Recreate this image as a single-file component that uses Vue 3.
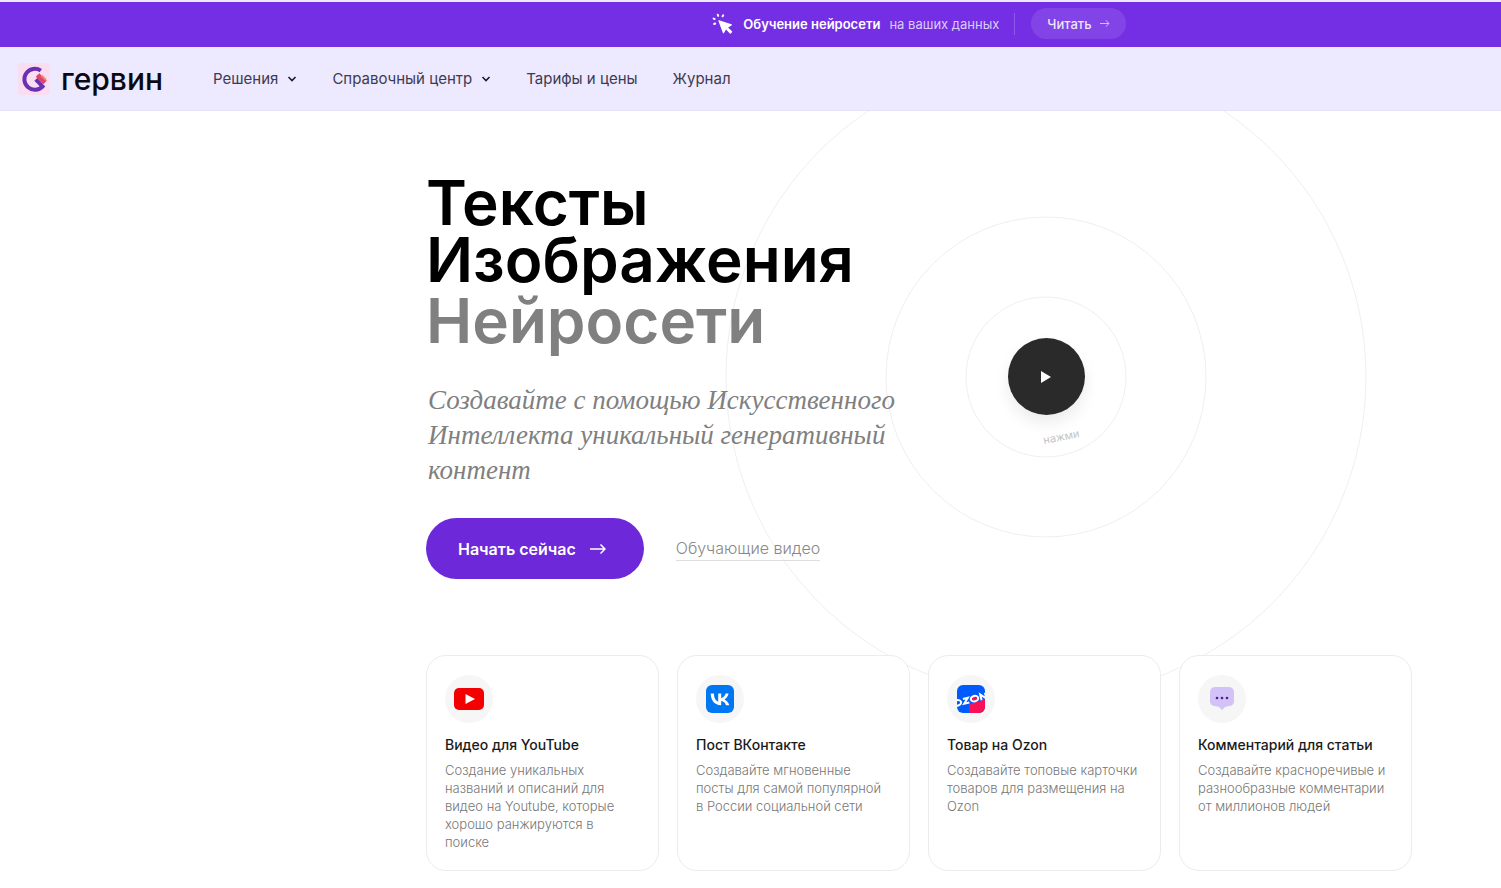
<template>
    <div class="page">
        <aside class="promo">
            <svg class="promo-icon" viewBox="0 0 22 22" aria-hidden="true">
                <path
                    class="fill"
                    d="M7 7.200 19.500 11.300a.6.6 0 0 1 0 1.100l-3.400 2 3.900 3.900a.6.6 0 0 1 0 .9l-1.200 1.200a.6.6 0 0 1-.9 0L14 16.500l-2 3.500a.6.6 0 0 1-1.100-.1L6.400 7.900A.5.5 0 0 1 7 7.200Z"
                />
                <path class="ray" d="M5.800 1.800l.4 1M11.200 2.300l-.6 1M1.600 5.600l1 .4M2.200 11l1-.5" />
            </svg>
            <strong>Обучение нейросети</strong>
            <span class="promo-text">на ваших данных</span>
            <a class="promo-link" href="#">
                Читать
                <svg class="promo-arrow" viewBox="0 0 12 10" aria-hidden="true">
                    <path d="M1 5h10M7.5 1.5 11 5 7.5 8.5" />
                </svg>
            </a>
        </aside>

        <header class="header">
            <a class="logo" href="#">
                <svg class="logo-icon" viewBox="0 0 32 32" aria-hidden="true">
                    <rect class="logo-bg" width="32" height="32" rx="4" />
                    <path class="logo-pen" d="M19.500 12 27 19.500" />
                    <path class="logo-tip" d="M23.500 12.500l4.500 4.500" />
                    <path class="logo-g" d="M22.800 7.600A10.500 10.500 0 1 0 24.500 23.500L17.800 16.300" />
                </svg>
                <span>гервин</span>
            </a>
            <nav class="nav">
                <a v-for="item in menu" :key="item.title" href="#">
                    {{ item.title }}
                    <svg v-if="item.dropdown" class="chevron" viewBox="0 0 10 8" aria-hidden="true">
                        <path d="M1.5 2 5 5.5 8.5 2" />
                    </svg>
                </a>
            </nav>
        </header>

        <main class="main">
            <section class="hero">
                <div class="intro">
                    <h1>
                        Тексты<br />Изображения
                        <span class="muted">Нейросети</span>
                    </h1>
                    <p class="lead">
                        Создавайте с помощью Искусственного<br />
                        Интеллекта уникальный генеративный<br />
                        контент
                    </p>
                    <div class="actions">
                        <button type="button" class="start">
                            Начать сейчас
                            <svg viewBox="0 0 16 12" aria-hidden="true">
                                <path d="M0 6h15M10.5 1.5 15 6l-4.5 4.5" />
                            </svg>
                        </button>
                        <a class="video-link" href="#">Обучающие видео</a>
                    </div>
                </div>
                <div class="player">
                    <svg class="rings" viewBox="0 0 642 642" aria-hidden="true">
                        <circle v-for="r in rings" :key="r" cx="321" cy="321" :r="r" />
                        <text x="319" y="388" transform="rotate(-11 319 388)">нажми</text>
                    </svg>
                    <button type="button" class="play" aria-label="нажми">
                        <svg viewBox="0 0 12 14" aria-hidden="true">
                            <path d="M1 1v12l10-6Z" />
                        </svg>
                    </button>
                </div>
            </section>

            <section class="cards">
                <article v-for="card in cards" :key="card.title" class="card">
                    <div class="badge">
                        <svg v-if="card.icon === 'youtube'" viewBox="0 0 30 30" aria-hidden="true">
                            <rect x="0" y="4" width="30" height="22" rx="5" fill="#f40000" />
                            <path d="M11.5 10v10l9.5-5Z" fill="#fff" />
                        </svg>
                        <svg v-else-if="card.icon === 'vk'" viewBox="0 0 30 30" aria-hidden="true">
                            <rect x="1" y="1" width="28" height="28" rx="6" fill="#0077f2" />
                            <path
                                d="M15.9 21.2c-6.4 0-10-4.4-10.2-11.6h3.2c.1 5.3 2.4 7.5 4.3 8V9.6h3v4.6c1.8-.2 3.8-2.3 4.4-4.6h3c-.5 2.9-2.6 5-4.1 5.8 1.5.7 3.9 2.5 4.8 5.8H21c-.7-2.2-2.5-3.9-4.8-4.1v4.1Z"
                                fill="#fff"
                            />
                        </svg>
                        <svg v-else-if="card.icon === 'ozon'" viewBox="0 0 30 30" aria-hidden="true">
                            <clipPath id="ozon-box">
                                <rect x="1" y="1" width="28" height="28" rx="6" />
                            </clipPath>
                            <g clip-path="url(#ozon-box)">
                                <rect width="30" height="30" fill="#005bff" />
                                <path d="M13 20.5 30 15v15H13Z" fill="#f91155" />
                                <g class="ozon-word" transform="rotate(-14 15 15)">
                                    <ellipse cx="1" cy="15.5" rx="3.600" ry="2.700" />
                                    <path d="M7.200 13h5l-5 5h5.400" />
                                    <ellipse cx="18.500" cy="15.500" rx="3.800" ry="2.700" fill="#f91155" />
                                    <path d="M25 18.800v-6l5 5.500v-6" />
                                </g>
                            </g>
                        </svg>
                        <svg v-else viewBox="0 0 30 30" aria-hidden="true">
                            <path
                                d="M8 3h14a5 5 0 0 1 5 5v10a5 5 0 0 1-5 4l-4 1-3 3-3-3-4-1a5 5 0 0 1-5-4V8a5 5 0 0 1 5-5Z"
                                fill="#d3c2f8"
                            />
                            <g fill="#4c1d95">
                                <circle cx="10" cy="14" r="1.3" />
                                <circle cx="15" cy="14" r="1.3" />
                                <circle cx="20" cy="14" r="1.3" />
                            </g>
                        </svg>
                    </div>
                    <h2>{{ card.title }}</h2>
                    <p>{{ card.text }}</p>
                </article>
            </section>
        </main>
    </div>
</template>

<script setup>
const menu = [
    { title: "Решения", dropdown: true },
    { title: "Справочный центр", dropdown: true },
    { title: "Тарифы и цены" },
    { title: "Журнал" },
];

const rings = [80, 160, 320];

const cards = [
    {
        icon: "youtube",
        title: "Видео для YouTube",
        text: "Создание уникальных названий и описаний для видео на Youtube, которые хорошо ранжируются в поиске",
    },
    {
        icon: "vk",
        title: "Пост ВКонтакте",
        text: "Создавайте мгновенные посты для самой популярной в России социальной сети",
    },
    {
        icon: "ozon",
        title: "Товар на Ozon",
        text: "Создавайте топовые карточки товаров для размещения на Ozon",
    },
    {
        icon: "comment",
        title: "Комментарий для статьи",
        text: "Создавайте красноречивые и разнообразные комментарии от миллионов людей",
    },
];
</script>

<style>
body {
    background: #fff;
}
</style>

<style scoped>
.page {
    font-family: "Inter", sans-serif;
    color: #111;
}
a {
    color: inherit;
    text-decoration: none;
}
svg {
    display: block;
    fill: none;
}
.promo {
    display: flex;
    align-items: center;
    justify-content: center;
    height: 43px;
    padding: 0 0 2px 337px;
    border-top: 2px solid #ede9fe;
    background: #742ee3;
    color: #fff;
    font-size: 13px;
}
.promo strong {
    font-weight: 600;
}
.promo-icon {
    width: 22px;
    height: 22px;
    margin-right: 9px;
}
.promo-icon .fill {
    fill: #fff;
}
.promo-icon .ray {
    stroke: #fff;
    stroke-width: 2;
    stroke-linecap: round;
}
.promo-text {
    margin-left: 9px;
    padding-right: 15px;
    border-right: 1px solid #8f58ea;
    line-height: 22px;
    color: #dccbfa;
}
.promo-link {
    display: flex;
    align-items: center;
    gap: 7px;
    height: 31px;
    margin-left: 16px;
    padding: 0 16px;
    border-radius: 16px;
    background: #8244e6;
    color: #efe6fd;
    font-weight: 500;
}
.promo-arrow {
    width: 11px;
    height: 9px;
    stroke: #dccbfa;
}
.header {
    display: flex;
    align-items: center;
    height: 63px;
    padding: 0 18px;
    border-bottom: 1px solid #e6e2f3;
    background: #ede9fe;
}
.logo {
    display: flex;
    align-items: center;
    gap: 11px;
    width: 195px;
    font-size: 30px;
    font-weight: 500;
    color: #0a0a14;
}
.logo span {
    line-height: 32px;
}
.logo-icon {
    width: 32px;
    height: 32px;
}
.logo-bg {
    fill: #f8def0;
}
.logo-g {
    stroke: #6b2fb3;
    stroke-width: 4;
}
.logo-pen {
    stroke: #e0446c;
    stroke-width: 5;
}
.logo-tip {
    stroke: #f58a6a;
    stroke-width: 2;
}
.nav {
    display: flex;
    gap: 35px;
    font-size: 15px;
    color: #3d3a52;
}
.nav a {
    display: flex;
    align-items: center;
    gap: 9px;
}
.chevron {
    width: 10px;
    height: 8px;
    stroke: #1c1930;
    stroke-width: 1.6;
}
.main {
    padding: 63px 89px 0 426px;
    overflow: hidden;
}
.hero {
    display: grid;
    grid-template-columns: 500px 240px;
    align-items: center;
}
.intro {
    position: relative;
    z-index: 1;
}
h1 {
    margin: 0;
    font-size: 62px;
    font-weight: 600;
    line-height: 57px;
    color: #000;
}
.muted {
    display: block;
    margin-top: 2px;
    line-height: 61px;
    color: #808080;
}
.lead {
    margin: 32px 0 30px;
    padding-left: 2px;
    font-family: "Liberation Serif", serif;
    font-style: italic;
    font-size: 27px;
    line-height: 35px;
    white-space: nowrap;
    color: #808080;
}
.actions {
    display: flex;
    align-items: center;
    gap: 32px;
}
.start {
    display: flex;
    align-items: center;
    gap: 14px;
    height: 61px;
    padding: 0 38px 0 32px;
    border: none;
    border-radius: 31px;
    background: #6d28d9;
    color: #fff;
    font-family: inherit;
    font-size: 16px;
    font-weight: 600;
}
.start svg {
    width: 16px;
    height: 12px;
    stroke: #fff;
    stroke-width: 1.5;
}
.video-link {
    border-bottom: 1px solid #ddd;
    font-size: 16px;
    font-weight: 300;
    line-height: 23px;
    color: #888;
}
.player {
    position: relative;
    display: flex;
    align-items: center;
    justify-content: center;
}
.rings {
    position: absolute;
    top: 50%;
    left: 50%;
    width: 642px;
    height: 642px;
    transform: translate(-50%, -50%);
    stroke: #efefef;
}
.rings text {
    stroke: none;
    fill: #c4c4c4;
    font-size: 11px;
}
.play {
    position: relative;
    display: flex;
    align-items: center;
    justify-content: center;
    width: 77px;
    height: 77px;
    padding: 0;
    border: none;
    border-radius: 50%;
    background: #2a2a2a;
    box-shadow: 0 8px 16px rgba(0, 0, 0, 0.08);
}
.play svg {
    width: 12px;
    height: 14px;
    fill: #fff;
}
.cards {
    position: relative;
    display: grid;
    grid-template-columns: repeat(4, 1fr);
    gap: 18px;
    margin-top: 76px;
}
.card {
    padding: 19px 18px;
    border: 1px solid #ececec;
    border-radius: 20px;
    background: #fff;
}
.badge {
    display: flex;
    align-items: center;
    justify-content: center;
    width: 48px;
    height: 48px;
    border-radius: 50%;
    background: #f6f6f6;
}
.badge svg {
    width: 30px;
    height: 30px;
}
.ozon-word {
    stroke: #fff;
    stroke-width: 2;
}
h2 {
    margin: 12px 0 6px;
    font-size: 14px;
    font-weight: 500;
    line-height: 20px;
    color: #1a1a1a;
}
.card p {
    margin: 0;
    font-size: 13px;
    font-weight: 300;
    line-height: 18px;
    color: #777;
}
</style>
